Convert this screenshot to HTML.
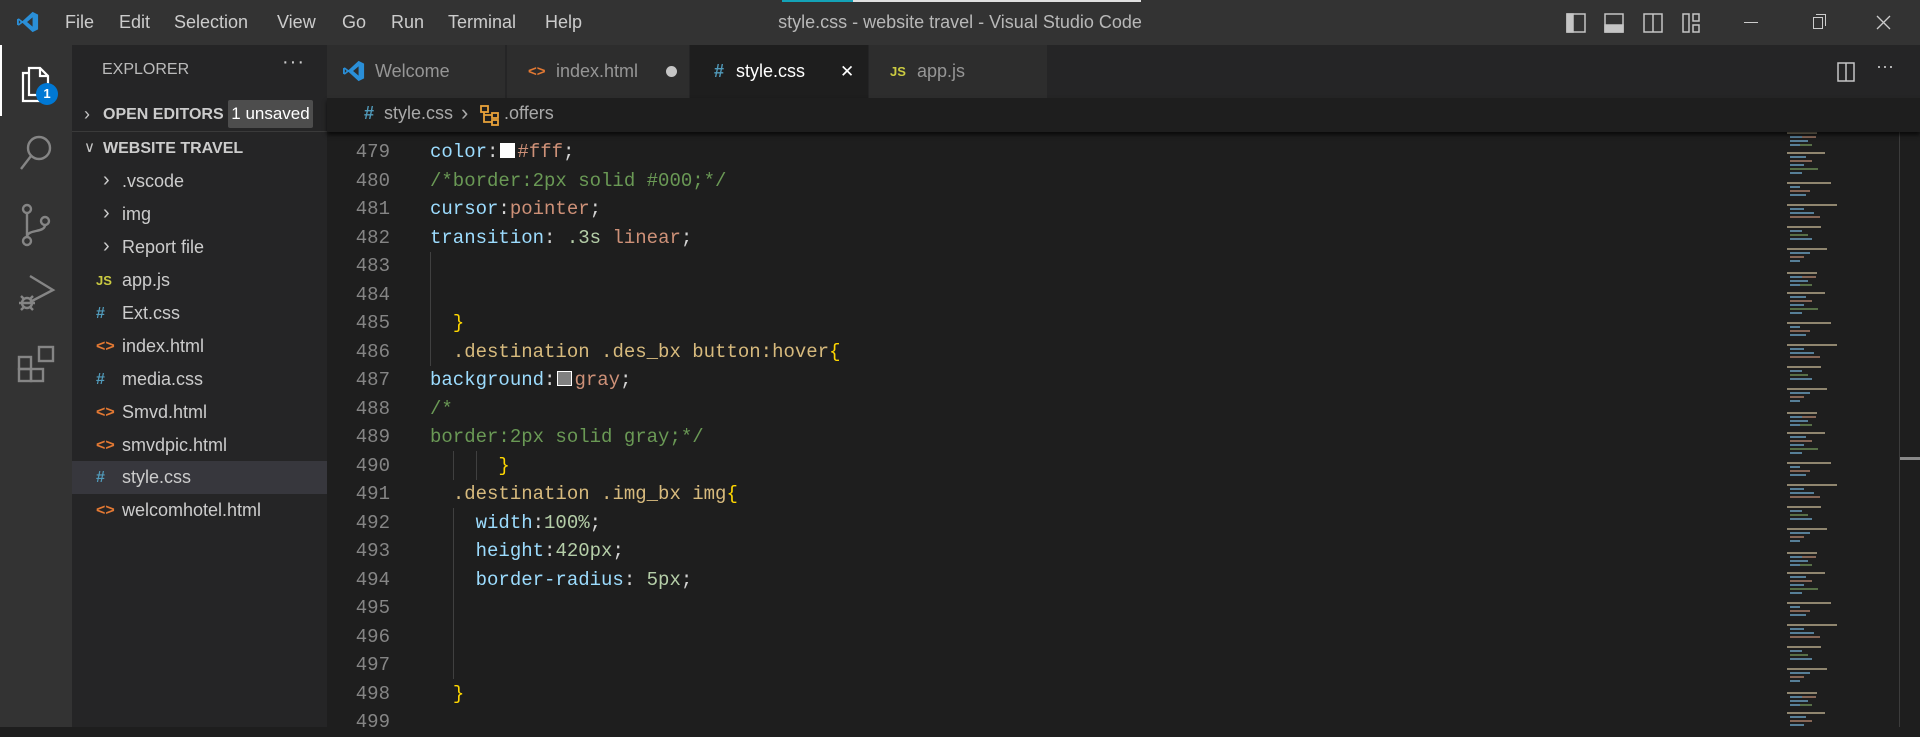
<!DOCTYPE html>
<html><head><meta charset="utf-8"><style>
*{margin:0;padding:0;box-sizing:border-box}
body{width:1920px;height:727px;overflow:hidden;background:#1e1e1e;font-family:"Liberation Sans",sans-serif;position:relative}
.abs{position:absolute}
#title{left:0;top:0;width:1920px;height:45px;background:#333333}
.menu{position:absolute;top:12px;font-size:18px;color:#cccccc}
#act{left:0;top:45px;width:72px;height:682px;background:#333333}
#side{left:72px;top:45px;width:255px;height:682px;background:#252526;color:#cccccc}
.si{position:absolute;left:0;width:255px;height:33px;line-height:33px;font-size:18px;color:#cccccc}
.si .ic{position:absolute;left:24px;font-size:16px;font-weight:bold}
.si .tx{position:absolute;left:50px}
.chev{position:absolute;left:30px;top:0;color:#c5c5c5}
#tabs{left:327px;top:45px;width:1593px;height:53px;background:#252526}
.tab{position:absolute;top:0;height:53px;background:#2d2d2d;font-size:18px;color:#969696;line-height:53px}
#bc{left:327px;top:98px;width:1593px;height:34px;background:#1e1e1e;font-size:18px;color:#a9a9a9;box-shadow:0 3px 4px #000a;z-index:2}
#code{left:327px;top:0;width:1450px;height:727px;font-family:"Liberation Mono",monospace;font-size:19px}
.ln{position:absolute;left:0;width:63px;text-align:right;color:#858585;height:28.5px;line-height:28.5px}
.cl{position:absolute;left:103px;white-space:pre;color:#d4d4d4;height:28.5px;line-height:28.5px}
.p{color:#9cdcfe}.v{color:#ce9178}.c{color:#6a9955}.s{color:#d7ba7d}.b{color:#ffd700}.n{color:#b5cea8}
.g{position:absolute;width:1px;background:#404040}
.sw{display:inline-block;width:15px;height:15px;border:1px solid #fff;vertical-align:-1px;margin:0 2px}
</style></head><body>
<div id="title" class="abs">
<svg class="abs" style="left:17px;top:11px" width="22" height="22" viewBox="0 0 24 24"><path d="M17 1 L23 4 V20 L17 23 L6 13 L2 16 L0 15 V9 L2 8 L6 11 Z M17 7 L11 12 L17 17 Z M2 10 V14 L4 12Z" fill="#2a8fd8"/></svg>
<span class="menu" style="left:65px">File</span><span class="menu" style="left:119px">Edit</span><span class="menu" style="left:174px">Selection</span><span class="menu" style="left:277px">View</span><span class="menu" style="left:342px">Go</span><span class="menu" style="left:391px">Run</span><span class="menu" style="left:448px">Terminal</span><span class="menu" style="left:545px">Help</span>
<div class="abs" style="left:782px;top:0;width:71px;height:2px;background:#14a3b8"></div>
<div class="abs" style="left:853px;top:0;width:288px;height:2px;background:#e0e0e0"></div>
<span class="menu" style="left:0;width:1920px;text-align:center;color:#b8b8b8">style.css - website travel - Visual Studio Code</span>
<svg class="abs" style="left:1566px;top:13px" width="160" height="20" viewBox="0 0 160 20" fill="none" stroke="#c5c5c5" stroke-width="1.5">
<rect x="1" y="1" width="18" height="18"/><rect x="1" y="1" width="6" height="18" fill="#c5c5c5"/>
<rect x="39" y="1" width="18" height="18"/><rect x="39" y="12" width="18" height="7" fill="#c5c5c5"/>
<rect x="78" y="1" width="18" height="18"/><line x1="87" y1="1" x2="87" y2="19"/>
<rect x="117" y="1" width="6" height="18"/><rect x="127" y="1" width="6" height="7"/><rect x="127" y="12" width="6" height="7"/>
</svg>
<div class="abs" style="left:1744px;top:22px;width:14px;height:1px;background:#ccc"></div>
<div class="abs" style="left:1813px;top:17px;width:10px;height:12px;border:1px solid #ccc"></div>
<div class="abs" style="left:1816px;top:14px;width:10px;height:12px;border-top:1px solid #ccc;border-right:1px solid #ccc"></div>
<svg class="abs" style="left:1876px;top:15px" width="15" height="15"><path d="M1 1L14 14M14 1L1 14" stroke="#ccc" stroke-width="1.3"/></svg>
</div>

<div id="act" class="abs">
<div class="abs" style="left:0;top:0;width:2px;height:71px;background:#fff"></div>
<svg class="abs" style="left:20px;top:18px" width="34" height="40" viewBox="0 0 34 40" fill="none" stroke="#fff" stroke-width="2.2"><path d="M9 5H20L28 13V32H9Z"/><path d="M20 5V13H28"/><path d="M9 10H3V38H20V32"/></svg>
<div class="abs" style="left:36px;top:38px;width:22px;height:22px;border-radius:50%;background:#0078d4;color:#fff;font-size:13px;font-weight:bold;text-align:center;line-height:22px">1</div>
<svg class="abs" style="left:18px;top:88px" width="36" height="40" viewBox="0 0 36 40" fill="none" stroke="#858585" stroke-width="2.4"><circle cx="21" cy="15" r="11"/><path d="M13 23L3 36"/></svg>
<svg class="abs" style="left:20px;top:158px" width="32" height="44" viewBox="0 0 32 44" fill="none" stroke="#858585" stroke-width="2.4"><circle cx="7" cy="6" r="4"/><circle cx="7" cy="38" r="4"/><circle cx="25" cy="18" r="4"/><path d="M7 10V34M25 22C25 30 7 26 7 34"/></svg>
<svg class="abs" style="left:17px;top:226px" width="40" height="40" viewBox="0 0 40 40" fill="none" stroke="#858585" stroke-width="2.4"><path d="M13 5L36 19L13 31"/><circle cx="10" cy="32" r="5"/><path d="M2 32H18M4 25L7 28M16 25L13 28M4 39L7 36M16 39L13 36"/></svg>
<svg class="abs" style="left:17px;top:300px" width="40" height="40" viewBox="0 0 40 40" fill="none" stroke="#858585" stroke-width="2.4"><rect x="2" y="12" width="12" height="12"/><rect x="2" y="24" width="12" height="12"/><rect x="14" y="24" width="12" height="12"/><rect x="22" y="2" width="14" height="14"/></svg>
</div>

<div id="side" class="abs">
<div class="abs" style="left:30px;top:16px;font-size:16px;color:#bbbbbb">EXPLORER</div>
<div class="abs" style="left:210px;top:6px;font-size:20px;color:#ccc;letter-spacing:1px">···</div>
<div class="si" style="top:53px"><span class="abs" style="left:12px;font-size:18px;color:#c5c5c5">&#x203A;</span><span class="abs" style="left:31px;font-weight:bold;font-size:16px">OPEN EDITORS</span></div>
<div class="abs" style="left:156px;top:55px;width:85px;height:28px;background:#4d4d4d;border-radius:2px;color:#fff;font-size:17px;line-height:28px;text-align:center">1 unsaved</div>
<div class="abs" style="left:0;top:86px;width:255px;height:1px;background:#3a3a3a"></div>
<div class="si" style="top:87px"><span class="abs" style="left:12px;color:#c5c5c5;font-size:15px;top:-1px">&#x2228;</span><span class="abs" style="left:31px;font-weight:bold;font-size:16px">WEBSITE TRAVEL</span></div>
<div class="si" style="top:120px"><span class="abs" style="left:31px;font-size:20px;top:-1px">&#x203A;</span><span class="tx">.vscode</span></div>
<div class="si" style="top:153px"><span class="abs" style="left:31px;font-size:20px;top:-1px">&#x203A;</span><span class="tx">img</span></div>
<div class="si" style="top:186px"><span class="abs" style="left:31px;font-size:20px;top:-1px">&#x203A;</span><span class="tx">Report file</span></div>
<div class="si" style="top:219px"><span class="ic" style="color:#cbcb41;font-size:13px">JS</span><span class="tx">app.js</span></div>
<div class="si" style="top:252px"><span class="ic" style="color:#519aba">#</span><span class="tx">Ext.css</span></div>
<div class="si" style="top:285px"><span class="ic" style="color:#e37933">&lt;&gt;</span><span class="tx">index.html</span></div>
<div class="si" style="top:318px"><span class="ic" style="color:#519aba">#</span><span class="tx">media.css</span></div>
<div class="si" style="top:351px"><span class="ic" style="color:#e37933">&lt;&gt;</span><span class="tx">Smvd.html</span></div>
<div class="si" style="top:384px"><span class="ic" style="color:#e37933">&lt;&gt;</span><span class="tx">smvdpic.html</span></div>
<div class="si" style="top:416px;background:#37373d"><span class="ic" style="color:#519aba">#</span><span class="tx">style.css</span></div>
<div class="si" style="top:449px"><span class="ic" style="color:#e37933">&lt;&gt;</span><span class="tx">welcomhotel.html</span></div>
</div>

<div id="tabs" class="abs">
<div class="tab" style="left:0;width:178px"><svg class="abs" style="left:16px;top:15px" width="22" height="22" viewBox="0 0 24 24"><path d="M17 1 L23 4 V20 L17 23 L6 13 L2 16 L0 15 V9 L2 8 L6 11 Z M17 7 L11 12 L17 17 Z M2 10 V14 L4 12Z" fill="#2a8fd8"/></svg><span class="abs" style="left:48px">Welcome</span></div>
<div class="tab" style="left:179px;width:183px;border-left:1px solid #252526"><span class="abs" style="left:21px;color:#e37933;font-weight:bold;font-size:15px">&lt;&gt;</span><span class="abs" style="left:49px">index.html</span><span class="abs" style="left:159px;top:21px;width:11px;height:11px;border-radius:50%;background:#c5c5c5"></span></div>
<div class="tab" style="left:363px;width:178px;background:#1e1e1e;color:#fff"><span class="abs" style="left:24px;color:#519aba;font-weight:bold">#</span><span class="abs" style="left:46px">style.css</span><span class="abs" style="left:150px;font-size:17px">&#x2715;</span></div>
<div class="tab" style="left:542px;width:178px"><span class="abs" style="left:21px;color:#cbcb41;font-weight:bold;font-size:13px">JS</span><span class="abs" style="left:48px">app.js</span></div>
<svg class="abs" style="left:1510px;top:17px" width="18" height="20"><rect x="1" y="1" width="16" height="18" fill="none" stroke="#c5c5c5" stroke-width="1.5"/><line x1="9" y1="1" x2="9" y2="19" stroke="#c5c5c5" stroke-width="1.5"/></svg>
<span class="abs" style="left:1549px;top:11px;color:#c5c5c5;font-size:18px">···</span>
</div>

<div id="bc" class="abs">
<span class="abs" style="left:37px;top:5px;color:#519aba;font-weight:bold">#</span>
<span class="abs" style="left:57px;top:5px">style.css</span>
<span class="abs" style="left:134px;top:2px;font-size:22px">&#x203A;</span>
<svg class="abs" style="left:152px;top:6px" width="22" height="22" viewBox="0 0 22 22" fill="none" stroke="#e8a23a" stroke-width="1.8"><rect x="2" y="2" width="7" height="6"/><rect x="13" y="9" width="6" height="5"/><rect x="13" y="16" width="6" height="5"/><path d="M5 8V18H13M5 11H13"/></svg>
<span class="abs" style="left:177px;top:5px">.offers</span>
</div>

<div id="code" class="abs">
<div class="ln" style="top:109px">478</div><div class="cl" style="top:109px"><span class="p">background</span>:<span class="v">rgba(0,0,0)</span>;</div>
<div class="ln" style="top:138px">479</div><div class="cl" style="top:138px"><span class="p">color</span>:<span class="sw" style="background:#fff"></span><span class="v">#fff</span>;</div>
<div class="ln" style="top:166.5px">480</div><div class="cl c" style="top:166.5px">/*border:2px solid #000;*/</div>
<div class="ln" style="top:195px">481</div><div class="cl" style="top:195px"><span class="p">cursor</span>:<span class="v">pointer</span>;</div>
<div class="ln" style="top:223.5px">482</div><div class="cl" style="top:223.5px"><span class="p">transition</span>: <span class="n">.3s</span> <span class="v">linear</span>;</div>
<div class="ln" style="top:252px">483</div>
<div class="ln" style="top:280.5px">484</div>
<div class="ln" style="top:309px">485</div><div class="cl" style="top:309px">  <span class="b">}</span></div>
<div class="ln" style="top:337.5px">486</div><div class="cl" style="top:337.5px">  <span class="s">.destination .des_bx button:hover</span><span class="b">{</span></div>
<div class="ln" style="top:366px">487</div><div class="cl" style="top:366px"><span class="p">background</span>:<span class="sw" style="background:#808080"></span><span class="v">gray</span>;</div>
<div class="ln" style="top:394.5px">488</div><div class="cl c" style="top:394.5px">/*</div>
<div class="ln" style="top:423px">489</div><div class="cl c" style="top:423px">border:2px solid gray;*/</div>
<div class="ln" style="top:451.5px">490</div><div class="cl" style="top:451.5px">      <span class="b">}</span></div>
<div class="ln" style="top:480px">491</div><div class="cl" style="top:480px">  <span class="s">.destination .img_bx img</span><span class="b">{</span></div>
<div class="ln" style="top:508.5px">492</div><div class="cl" style="top:508.5px">    <span class="p">width</span>:<span class="n">100%</span>;</div>
<div class="ln" style="top:537px">493</div><div class="cl" style="top:537px">    <span class="p">height</span>:<span class="n">420px</span>;</div>
<div class="ln" style="top:565.5px">494</div><div class="cl" style="top:565.5px">    <span class="p">border-radius</span>: <span class="n">5px</span>;</div>
<div class="ln" style="top:594px">495</div>
<div class="ln" style="top:622.5px">496</div>
<div class="ln" style="top:651px">497</div>
<div class="ln" style="top:679.5px">498</div><div class="cl" style="top:679.5px">  <span class="b">}</span></div>
<div class="ln" style="top:708px">499</div>
<div class="g" style="left:103px;top:252px;height:114px"></div>
<div class="g" style="left:126px;top:451px;height:29px"></div>
<div class="g" style="left:149px;top:451px;height:29px"></div>
<div class="g" style="left:126px;top:508px;height:171px"></div>
</div>

<svg class="abs" style="left:1787px;top:130px" width="90" height="597">
<defs><pattern id="mm" width="90" height="140" patternUnits="userSpaceOnUse">
<rect x="0" y="2" width="30" height="2" fill="#b6a98a"/><rect x="3" y="6" width="12" height="2" fill="#6a9fc0"/><rect x="15" y="6" width="14" height="2" fill="#a97f6a"/>
<rect x="3" y="10" width="18" height="2" fill="#6a9fc0"/><rect x="3" y="14" width="10" height="2" fill="#6a9fc0"/><rect x="13" y="14" width="12" height="2" fill="#6a8a55"/>
<rect x="0" y="22" width="38" height="2" fill="#b6a98a"/><rect x="3" y="26" width="16" height="2" fill="#6a9fc0"/><rect x="3" y="30" width="22" height="2" fill="#a97f6a"/>
<rect x="3" y="34" width="14" height="2" fill="#6a9fc0"/><rect x="3" y="38" width="28" height="2" fill="#6a8a55"/><rect x="3" y="42" width="12" height="2" fill="#6a9fc0"/>
<rect x="0" y="52" width="44" height="2" fill="#b6a98a"/><rect x="3" y="56" width="10" height="2" fill="#6a9fc0"/><rect x="3" y="60" width="20" height="2" fill="#a97f6a"/><rect x="3" y="64" width="16" height="2" fill="#6a9fc0"/>
<rect x="0" y="74" width="50" height="2" fill="#b6a98a"/><rect x="3" y="78" width="14" height="2" fill="#6a9fc0"/><rect x="3" y="82" width="24" height="2" fill="#6a9fc0"/><rect x="3" y="86" width="30" height="2" fill="#a97f6a"/>
<rect x="0" y="96" width="34" height="2" fill="#b6a98a"/><rect x="3" y="100" width="12" height="2" fill="#6a9fc0"/><rect x="3" y="104" width="18" height="2" fill="#6a8a55"/><rect x="3" y="108" width="22" height="2" fill="#6a9fc0"/>
<rect x="0" y="118" width="40" height="2" fill="#b6a98a"/><rect x="3" y="122" width="20" height="2" fill="#6a9fc0"/><rect x="3" y="126" width="14" height="2" fill="#a97f6a"/><rect x="3" y="130" width="10" height="2" fill="#6a9fc0"/>
</pattern></defs>
<rect width="90" height="597" fill="url(#mm)" opacity="0.75"/>
</svg>
<div class="abs" style="left:1899px;top:130px;width:1px;height:597px;background:#3c3c3c"></div>
<div class="abs" style="left:1900px;top:457px;width:20px;height:3px;background:#8a8a8a"></div>
</body></html>
